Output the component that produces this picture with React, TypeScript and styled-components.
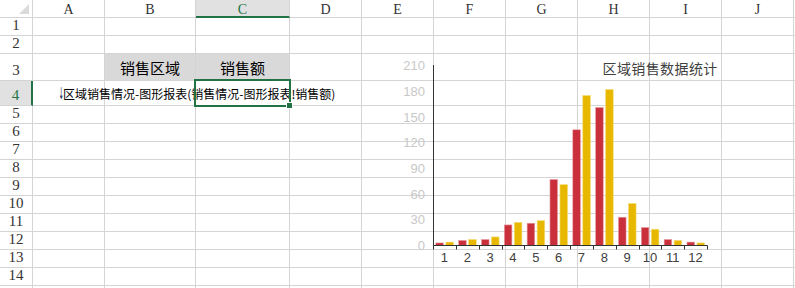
import React from 'react'
import { styled, createGlobalStyle } from 'styled-components'

const GlobalStyle = createGlobalStyle`
  html, body {
    margin: 0;
    padding: 0;
    background: #fff;
    overflow: hidden;
  }
`

const COLS = ['A', 'B', 'C', 'D', 'E', 'F', 'G', 'H', 'I', 'J', 'K']
const COL_WIDTHS = [72, 91, 94, 72, 72, 72, 72, 72, 72, 72, 72]
const ROW_HEIGHTS = [18, 18, 27, 25, 18, 18, 18, 18, 18, 18, 18, 18, 18, 18]

const ACTIVE_COL = 'C'
const ACTIVE_ROW = 4

const GRID = '#d4d4d4'
const GREEN = '#217346'
const CJK = '"Noto Sans CJK SC", "Noto Sans", sans-serif'
const HEAD = '"Liberation Serif", "DejaVu Serif", serif'

const Sheet = styled.div<{ $cols: string; $rows: string }>`
  position: relative;
  display: grid;
  grid-template-columns: ${p => p.$cols};
  grid-template-rows: ${p => p.$rows};
  width: 795px;
  height: 288px;
  overflow: hidden;
`

const Corner = styled.div`
  position: relative;
  box-sizing: border-box;
  border-right: 1px solid ${GRID};
  border-bottom: 1px solid ${GRID};

  &::after {
    content: '';
    position: absolute;
    right: 3px;
    bottom: 3px;
    border-style: solid;
    border-width: 0 0 10px 10px;
    border-color: transparent transparent #dadada transparent;
  }
`

const ColHeader = styled.div<{ $active?: boolean }>`
  box-sizing: border-box;
  display: flex;
  align-items: center;
  justify-content: center;
  padding-top: 3px;
  font: 14px ${HEAD};
  color: ${p => (p.$active ? GREEN : '#333')};
  background: ${p => (p.$active ? '#e1e1e1' : '#fff')};
  border-right: 1px solid ${GRID};
  border-bottom: ${p => (p.$active ? `2px solid ${GREEN}` : `1px solid ${GRID}`)};
`

const RowHeader = styled.div<{ $active?: boolean }>`
  box-sizing: border-box;
  display: flex;
  align-items: flex-end;
  justify-content: center;
  padding-bottom: 1px;
  line-height: 16px;
  font: 15px ${HEAD};
  color: ${p => (p.$active ? GREEN : '#333')};
  background: ${p => (p.$active ? '#e1e1e1' : '#fff')};
  border-right: ${p => (p.$active ? `2px solid ${GREEN}` : `1px solid ${GRID}`)};
  border-bottom: 1px solid ${GRID};
`

const Cell = styled.div<{ $fill?: string; $indent?: number }>`
  position: relative;
  box-sizing: border-box;
  display: flex;
  align-items: center;
  justify-content: ${p => (p.$indent != null ? 'flex-start' : 'center')};
  padding-left: ${p => p.$indent ?? 0}px;
  min-width: 0;
  white-space: nowrap;
  font: 15px ${CJK};
  color: #000;
  background: ${p => p.$fill ?? 'transparent'};
  border-right: 1px solid ${GRID};
  border-bottom: 1px solid ${GRID};
`

const SpillText = styled.span`
  font: 12px ${CJK};
  color: #000;
  white-space: nowrap;
  z-index: 1;
`

const Arrow = styled.span`
  display: inline-block;
  width: 5px;
  margin-right: 1px;
  text-align: center;
  font: 16px "DejaVu Sans", sans-serif;
  line-height: 12px;
  color: #22365f;
  transform: scaleX(0.4);
`

const Selection = styled.div`
  position: absolute;
  left: -2px;
  top: -2px;
  right: -2px;
  bottom: -2px;
  z-index: 3;
  border: 2px solid ${GREEN};
  pointer-events: none;
`

const FillHandle = styled.div`
  position: absolute;
  right: -4px;
  bottom: -4px;
  width: 5px;
  height: 5px;
  background: ${GREEN};
  border: 1px solid #fff;
`

const ChartFrame = styled.div`
  position: absolute;
  left: 396px;
  top: 56px;
  width: 330px;
  height: 214px;
  z-index: 2;

  svg {
    display: block;
    overflow: visible;
  }

  .title {
    font: 14px ${CJK};
    fill: #404040;
    letter-spacing: 0.4px;
  }

  .ylabel {
    font: 13px "Liberation Sans", sans-serif;
    fill: #c8c8c8;
  }

  .xlabel {
    font: 13px "Liberation Sans", sans-serif;
    fill: #404040;
  }

  .axis {
    stroke: #333;
    stroke-width: 1;
  }

  .bar-red {
    fill: #c9303b;
    stroke: #e9a0a6;
    stroke-width: 0.6;
  }

  .bar-yellow {
    fill: #e8b800;
    stroke: #f4dc7c;
    stroke-width: 0.6;
  }
`

const red = [3, 6, 7, 24, 26, 77, 135, 161, 33, 21, 7, 4]
const yellow = [4, 7, 10, 27, 29, 71, 175, 182, 49, 19, 6, 3]

const X0 = 433
const X1 = 707
const Y0 = 245.5
const YTOP = 65.5
const scale = (Y0 - YTOP) / 210
const band = (X1 - X0) / 12

function SalesChart() {
  return (
    <ChartFrame>
      <svg width="330" height="214" viewBox="396 56 330 214">
        <text className="title" x="602.5" y="73.5">区域销售数据统计</text>

        {[0, 30, 60, 90, 120, 150, 180, 210].map(v => (
          <text key={v} className="ylabel" x="425" y={Y0 - v * scale + 4.6} textAnchor="end">
            {v}
          </text>
        ))}

        {red.map((v, i) => {
          const x = X0 + i * band + 2.8
          const h = v * scale
          const hy = yellow[i] * scale
          return (
            <g key={i}>
              <rect className="bar-red" x={x} y={Y0 - h} width="7.6" height={h} />
              <rect className="bar-yellow" x={x + 10} y={Y0 - hy} width="7.6" height={hy} />
            </g>
          )
        })}

        <line className="axis" x1="433.5" y1="65" x2="433.5" y2={Y0} />
        <line className="axis" x1="433" y1={Y0} x2={X1 + 0.5} y2={Y0} />
        {Array.from({ length: 13 }, (_, i) => {
          const x = Math.round(X0 + i * band) + 0.5
          return <line key={i} className="axis" x1={x} y1={Y0} x2={x} y2={Y0 + 4} />
        })}

        {red.map((_, i) => (
          <text key={i} className="xlabel" x={X0 + (i + 0.5) * band} y="262" textAnchor="middle">
            {i + 1}
          </text>
        ))}
      </svg>
    </ChartFrame>
  )
}

function cellContent(col: string, row: number) {
  if (row === 3 && col === 'B') return '销售区域'
  if (row === 3 && col === 'C') return '销售额'
  if (row === 4 && col === 'A')
    return (
      <SpillText>
        <Arrow>↓</Arrow>区域销售情况-图形报表(销售情况-图形报表!销售额)
      </SpillText>
    )
  return null
}

export default function App() {
  const cols = ['33px', ...COL_WIDTHS.map(w => `${w}px`)].join(' ')
  const rows = ['18px', ...ROW_HEIGHTS.map(h => `${h}px`), '18px'].join(' ')

  return (
    <>
      <GlobalStyle />
      <Sheet $cols={cols} $rows={rows}>
        <Corner />
        {COLS.map(c => (
          <ColHeader key={c} $active={c === ACTIVE_COL}>
            {c === 'K' ? '' : c}
          </ColHeader>
        ))}

        {[...ROW_HEIGHTS, 18].map((_, ri) => {
          const row = ri + 1
          const label = row <= ROW_HEIGHTS.length ? row : ''
          return (
            <React.Fragment key={row}>
              <RowHeader $active={row === ACTIVE_ROW}>{label}</RowHeader>
              {COLS.map(c => {
                const filled = row === 3 && (c === 'B' || c === 'C')
                const selected = row === ACTIVE_ROW && c === ACTIVE_COL
                const spill = row === 4 && c === 'A'
                return (
                  <Cell
                    key={c}
                    $fill={filled ? '#d9d9d9' : undefined}
                    $indent={spill ? 24 : undefined}
                  >
                    {cellContent(c, row)}
                    {selected && (
                      <Selection>
                        <FillHandle />
                      </Selection>
                    )}
                  </Cell>
                )
              })}
            </React.Fragment>
          )
        })}

        <SalesChart />
      </Sheet>
    </>
  )
}
